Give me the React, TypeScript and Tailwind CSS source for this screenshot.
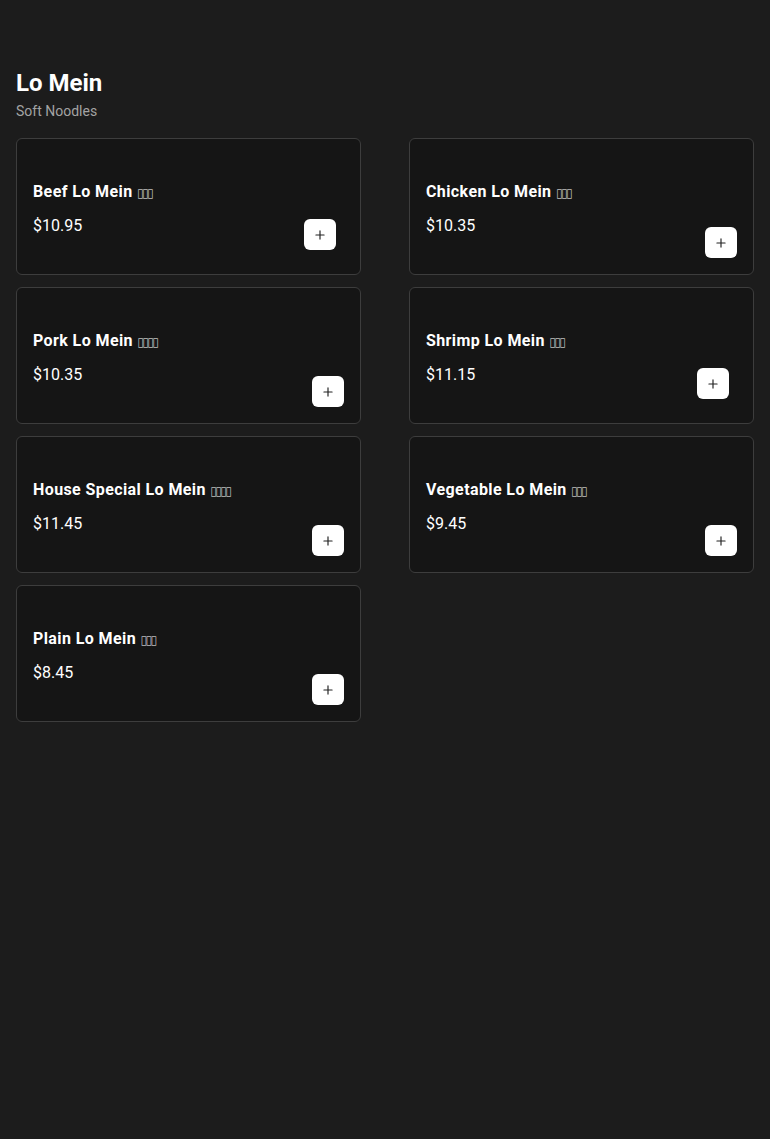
import React from 'react';
import { Plus } from 'lucide-react';

interface Dish {
  name: string;
  cn: string;
  price: string;
  shifted?: boolean;
}

const dishes: Dish[] = [
  { name: 'Beef Lo Mein', cn: '▯▯▯', price: '$10.95', shifted: true },
  { name: 'Chicken Lo Mein', cn: '▯▯▯', price: '$10.35' },
  { name: 'Pork Lo Mein', cn: '▯▯▯▯', price: '$10.35' },
  { name: 'Shrimp Lo Mein', cn: '▯▯▯', price: '$11.15', shifted: true },
  { name: 'House Special Lo Mein', cn: '▯▯▯▯', price: '$11.45' },
  { name: 'Vegetable Lo Mein', cn: '▯▯▯', price: '$9.45' },
  { name: 'Plain Lo Mein', cn: '▯▯▯', price: '$8.45' },
];

const DishCard: React.FC<{ dish: Dish }> = ({ dish }) => (
  <div className="h-[137px] bg-[#151515] border border-[#3d3d3d] rounded-md p-4 flex justify-between items-end">
    <div className="self-start mt-[25px]">
      <h3 className="text-base leading-6 font-bold tracking-wide text-white">
        {dish.name}{' '}
        <span className="text-[12px] font-normal text-[#bdbdbd] font-['DejaVu_Sans',sans-serif] tracking-[-1.6px]">
          {dish.cn}
        </span>
      </h3>
      <p className="mt-[9px] text-base leading-6 text-white">{dish.price}</p>
    </div>
    <button
      className={
        dish.shifted
          ? 'w-8 h-[31px] rounded-md bg-white flex items-center justify-center text-[#222] -translate-x-2 -translate-y-2'
          : 'w-8 h-[31px] rounded-md bg-white flex items-center justify-center text-[#222]'
      }
    >
      <Plus size={14} strokeWidth={2} />
    </button>
  </div>
);

export default function App() {
  return (
    <div className="min-h-[1139px] bg-[#1c1c1c] px-4 pt-[67px] font-['Roboto',sans-serif]">
      {/* Header */}
      <div>
        <h1 className="text-2xl leading-8 font-bold text-white">Lo Mein</h1>
        <p className="mt-0.5 text-sm leading-5 text-[#a3a3a3]">Soft Noodles</p>
      </div>

      {/* Dish grid */}
      <div className="mt-[17px] grid grid-cols-2 gap-x-12 gap-y-3">
        {dishes.map((d) => (
          <DishCard key={d.name} dish={d} />
        ))}
      </div>
    </div>
  );
}
